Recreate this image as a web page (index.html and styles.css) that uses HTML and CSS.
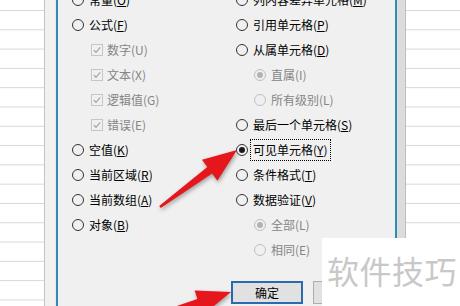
FILE: index.html
```html
<!DOCTYPE HTML>
<html>
<head>
<meta http-equiv="Content-Type" content="text/html; charset=utf-8">
<title>定位条件</title>
<link rel="stylesheet" href="styles.css">
</head>
<body>
<div class="screen">
	<div class="sheet sheet-left"></div>

	<div class="dialog">
		<div class="cols">
			<div class="col">
				<div class="opt"><span class="radio"></span><span class="lbl">常量(<u>O</u>)</span></div>
				<div class="opt"><span class="radio"></span><span class="lbl">公式(<u>F</u>)</span></div>
				<div class="opt sub off"><span class="check"><svg viewBox="0 0 11 11"><path d="M2 5.6 L4.4 8 L9 2.6"/></svg></span><span class="lbl">数字(U)</span></div>
				<div class="opt sub off"><span class="check"><svg viewBox="0 0 11 11"><path d="M2 5.6 L4.4 8 L9 2.6"/></svg></span><span class="lbl">文本(X)</span></div>
				<div class="opt sub off"><span class="check"><svg viewBox="0 0 11 11"><path d="M2 5.6 L4.4 8 L9 2.6"/></svg></span><span class="lbl">逻辑值(G)</span></div>
				<div class="opt sub off"><span class="check"><svg viewBox="0 0 11 11"><path d="M2 5.6 L4.4 8 L9 2.6"/></svg></span><span class="lbl">错误(E)</span></div>
				<div class="opt"><span class="radio"></span><span class="lbl">空值(<u>K</u>)</span></div>
				<div class="opt"><span class="radio"></span><span class="lbl">当前区域(<u>R</u>)</span></div>
				<div class="opt"><span class="radio"></span><span class="lbl">当前数组(<u>A</u>)</span></div>
				<div class="opt"><span class="radio"></span><span class="lbl">对象(<u>B</u>)</span></div>
			</div>
			<div class="col">
				<div class="opt"><span class="radio"></span><span class="lbl">列内容差异单元格(<u>M</u>)</span></div>
				<div class="opt"><span class="radio"></span><span class="lbl">引用单元格(<u>P</u>)</span></div>
				<div class="opt"><span class="radio"></span><span class="lbl">从属单元格(<u>D</u>)</span></div>
				<div class="opt sub off"><span class="radio on"></span><span class="lbl">直属(I)</span></div>
				<div class="opt sub off"><span class="radio"></span><span class="lbl">所有级别(L)</span></div>
				<div class="opt"><span class="radio"></span><span class="lbl">最后一个单元格(<u>S</u>)</span></div>
				<div class="opt"><span class="radio on"></span><span class="lbl focus">可见单元格(<u>Y</u>)</span></div>
				<div class="opt"><span class="radio"></span><span class="lbl">条件格式(<u>T</u>)</span></div>
				<div class="opt"><span class="radio"></span><span class="lbl">数据验证(<u>V</u>)</span></div>
				<div class="opt sub off"><span class="radio on"></span><span class="lbl">全部(L)</span></div>
				<div class="opt sub off"><span class="radio"></span><span class="lbl">相同(E)</span></div>
			</div>
		</div>
		<div class="buttons">
			<button class="btn btn-default">确定</button>
			<button class="btn">取消</button>
		</div>
	</div>

	<div class="sheet sheet-right"></div>

	<!-- 红色箭头 -->
	<svg class="arrows" width="460" height="306" viewBox="0 0 460 306">
		<polygon points="237,150 217.4,180.7 212.1,173.4 160.8,207.9 159.2,206.1 207.3,167 202,159.7"/>
		<polygon points="231,292 202.8,315 200,306.5 124,331 121.5,325 197.4,298.9 194.6,290.4"/>
	</svg>

	<div class="watermark">软件技巧</div>
</div>
</body>
</html>
```
FILE: styles.css
```css
*{
	margin: 0;
	padding: 0;
	box-sizing: border-box;
}

body{
	width: 460px;
	height: 306px;
	overflow: hidden;
	font-family: "Noto Sans CJK SC", "Liberation Sans", sans-serif;
	font-size: 12px;
	color: #000;
}

.screen{
	position: relative;
	display: flex;
	width: 460px;
	height: 306px;
	overflow: hidden;
	background-color: #fff;
}

/* 表格背景 */
.sheet{
	height: 100%;
	background-image: linear-gradient(to bottom, #d6d6d6 0, #d6d6d6 1px, transparent 1px);
	background-size: 100% 19.3px;
	background-position: 0 10px;
}
.sheet-left{
	width: 56px;
	background-color: #fff;
	border-right: 1px solid #e9e6e6;
	box-shadow: inset -10px 0 0 #f3f0f0, inset -11px 0 0 #c4c4c4;
}
.sheet-right{
	flex: 1;
	background-color: #fff;
	box-shadow: inset 8px 0 0 #dcdcdc, inset 9px 0 0 #bdbdbd;
}

/* 对话框 */
.dialog{
	width: 341px;
	height: 100%;
	background-color: #f0f0f0;
	border-left: 2px solid #2f8db5;
	border-right: 2px solid #2f8db5;
}
.cols{
	display: grid;
	grid-template-columns: 164px 1fr;
	padding-left: 14px;
	margin-top: -13px;
}
.opt{
	display: flex;
	align-items: center;
	height: 25px;
	white-space: nowrap;
}
.opt.sub{
	padding-left: 18px;
}
.opt.off .lbl{
	color: #858585;
}
.lbl{
	line-height: 16px;
}
.lbl u{
	text-decoration-thickness: 1px;
	text-underline-offset: 1px;
}
.lbl.focus{
	outline: 1px dotted #000;
	padding: 2px 2px;
	margin-left: -2px;
}

.radio{
	position: relative;
	width: 12px;
	height: 12px;
	border: 1px solid #333;
	border-radius: 50%;
	margin-right: 5px;
	flex: none;
}
.radio.on::after{
	content: "";
	position: absolute;
	left: 2px;
	top: 2px;
	width: 6px;
	height: 6px;
	border-radius: 50%;
	background-color: #1a1a1a;
}
.opt.off .radio{
	border-color: #bfbfbf;
}
.opt.off .radio.on::after{
	background-color: #b3b3b3;
}

.check{
	width: 12px;
	height: 12px;
	border: 1px solid #c6c6c6;
	margin-left: 1px;
	margin-right: 4px;
	flex: none;
}
.check svg{
	display: block;
	width: 10px;
	height: 10px;
	fill: none;
	stroke: #a3a3a3;
	stroke-width: 1.3;
}

.buttons{
	display: flex;
	justify-content: flex-end;
	gap: 10px;
	padding-right: 10px;
	margin-top: 19px;
}
.btn{
	width: 72px;
	height: 23px;
	font-family: inherit;
	font-size: 12px;
	color: #000;
	background-color: #e1e1e1;
	border: 1px solid #adadad;
}
.btn-default{
	border: 2px solid #2a6ab0;
}

.arrows{
	position: absolute;
	left: 0;
	top: 0;
	fill: #e5161c;
	filter: drop-shadow(1px 2px 2px rgba(0, 0, 0, 0.35));
}

.watermark{
	position: absolute;
	left: 322px;
	top: 238px;
	width: 138px;
	height: 68px;
	padding: 15px 0 0 5px;
	background-color: #fff;
	color: #c8c8c8;
	font-size: 32px;
	line-height: 34px;
	letter-spacing: 0.5px;
	white-space: nowrap;
}
```
